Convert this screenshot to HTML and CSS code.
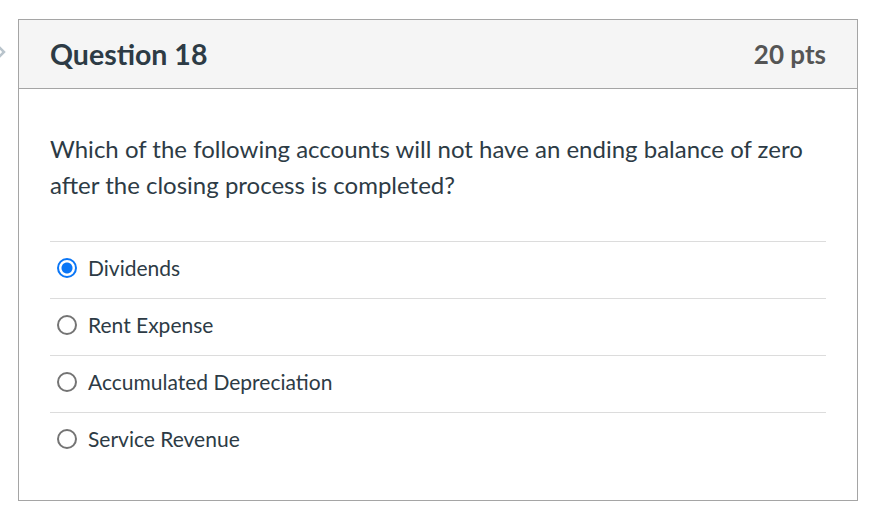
FILE: index.html
```html
<!DOCTYPE html>
<html>
<head>
<meta charset="utf-8">
<link rel="stylesheet" href="styles.css">
</head>
<body>
<div class="page">
  <svg class="nav-chevron" width="10" height="20" viewBox="0 0 10 20"><path d="M-3 3 L4 10 L-3 17" fill="none" stroke="#b9c4cc" stroke-width="2.5"/></svg>
  <div class="card">
    <div class="card-header">
      <h2 class="title">Question 18</h2>
      <div class="points">20 pts</div>
    </div>
    <div class="card-body">
      <p class="question">Which of the following accounts will not have an ending balance of zero after the closing process is completed?</p>
      <div class="answers">
        <label class="answer"><span class="radio checked"></span><span class="answer-text">Dividends</span></label>
        <label class="answer"><span class="radio"></span><span class="answer-text">Rent Expense</span></label>
        <label class="answer"><span class="radio"></span><span class="answer-text">Accumulated Depreciation</span></label>
        <label class="answer"><span class="radio"></span><span class="answer-text">Service Revenue</span></label>
      </div>
    </div>
  </div>
</div>
</body>
</html>
```
FILE: styles.css
```css
html, body {
  margin: 0;
  padding: 0;
  background: #fff;
}
body {
  font-family: Lato, "Open Sans", sans-serif;
  color: #2d3b45;
}
.page {
  position: relative;
  padding: 19px 0 0 18px;
}
.nav-chevron {
  position: absolute;
  left: 0;
  top: 42px;
}
.card {
  width: 838px;
  border: 1px solid #a5a5a5;
  height: 480px;
  box-sizing: content-box;
}
.card-header {
  background: #f5f5f5;
  border-bottom: 1px solid #a5a5a5;
  height: 68px;
  display: flex;
  align-items: center;
  justify-content: space-between;
  padding: 0 31px;
}
.title {
  margin: 0;
  font-size: 28.5px;
  font-weight: 700;
  color: #2d3b45;
}
.points {
  font-size: 26px;
  font-weight: 700;
  color: #555;
}
.card-body {
  padding: 0 31px;
}
.question {
  margin: 0;
  padding-top: 42px;
  font-size: 24px;
  line-height: 36px;
  color: #2d3b45;
}
.answers {
  margin-top: 38px;
}
.answer {
  display: flex;
  align-items: center;
  padding-bottom: 5px;
  box-sizing: border-box;
  height: 57px;
  border-top: 1px solid #dcdcdc;
}
.radio {
  width: 16px;
  height: 16px;
  border: 2px solid #747474;
  border-radius: 50%;
  margin-left: 7px;
  margin-right: 11px;
  box-sizing: content-box;
  flex: none;
}
.radio.checked {
  border-color: #0a76f6;
  background: radial-gradient(circle, #0a76f6 0 5px, #fff 6px);
}
.answer-text {
  font-size: 21px;
  color: #2d3b45;
}
```
